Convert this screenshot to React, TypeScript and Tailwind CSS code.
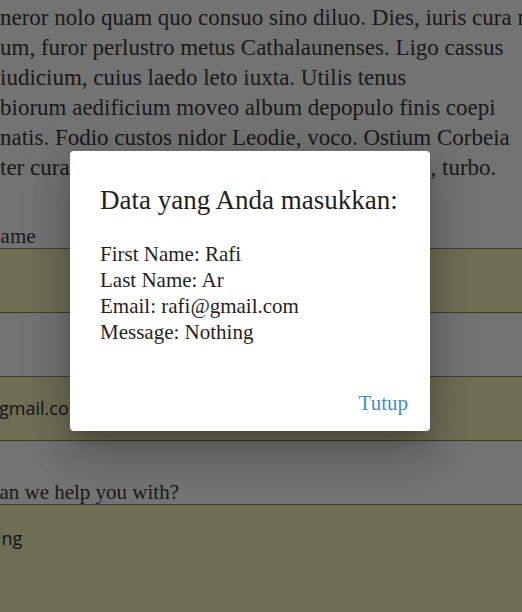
import React from 'react';

const serif = "font-['Liberation_Serif','DejaVu_Serif',serif]";
const sans = "font-['Open_Sans','Noto_Sans',sans-serif]";

const lines = [
  'neror nolo quam quo consuo sino diluo. Dies, iuris cura nam',
  'um, furor perlustro metus Cathalaunenses. Ligo cassus',
  'iudicium, cuius laedo leto iuxta. Utilis tenus',
  'biorum aedificium moveo album depopulo finis coepi',
  'natis. Fodio custos nidor Leodie, voco. Ostium Corbeia',
  'ter curatio, peior rumor nam sapio exsisto num, turbo.',
];

function Field({
  label,
  value,
  tall = false,
}: {
  label: string;
  value: string;
  tall?: boolean;
}) {
  return (
    <div className="mb-[39px]">
      <label className="block -ml-[56px] text-[21px] leading-[24px] whitespace-nowrap">
        {label}
      </label>
      <div
        className={`${sans} -ml-[53px] w-[700px] border-y border-[#8a8a72] bg-[#f3f3bd] px-[8px] text-[18px] text-[#2a2a2a] ${
          tall ? 'h-[160px] pt-[20px] leading-[27px]' : 'flex h-[65px] items-center'
        }`}
      >
        {value}
      </div>
    </div>
  );
}

export default function App() {
  return (
    <div className={`relative h-[612px] w-[522px] overflow-hidden bg-white ${serif} text-[#3a3a3a]`}>
      {/* page content */}
      <div className="pt-[3px]">
        <div className="text-[23px] leading-[30px]">
          {lines.map((l) => (
            <div key={l} className="whitespace-nowrap">
              {l}
            </div>
          ))}
        </div>

        <div className="mt-[41px]">
          <Field label="Last Name" value="Ar" />
          <Field label="Email" value="rafi@gmail.com" />
          <Field label="How can we help you with?" value="Nothing" tall />
        </div>
      </div>

      {/* dialog */}
      <div className="absolute inset-0 bg-black/[0.55]">
        <div className="ml-[70px] mt-[151px] flex h-[280px] w-[360px] flex-col rounded-[4px] bg-white shadow-[0_11px_15px_-7px_rgba(0,0,0,0.2),0_24px_38px_3px_rgba(0,0,0,0.14),0_9px_46px_8px_rgba(0,0,0,0.12)]">
          <div className="px-[30px] pt-[33px] text-[#1f1f1f]">
            <h2 className="text-[27px] leading-[32px]">Data yang Anda masukkan:</h2>
            <div className="mt-[25px] text-[21px] leading-[26px]">
              <p>First Name: Rafi</p>
              <p>Last Name: Ar</p>
              <p>Email: rafi@gmail.com</p>
              <p>Message: Nothing</p>
            </div>
          </div>
          <div className="mt-auto flex justify-end pb-[15px] pr-[22px]">
            <button className="text-[21px] leading-[26px] text-[#3d8ed3]">Tutup</button>
          </div>
        </div>
      </div>
    </div>
  );
}
